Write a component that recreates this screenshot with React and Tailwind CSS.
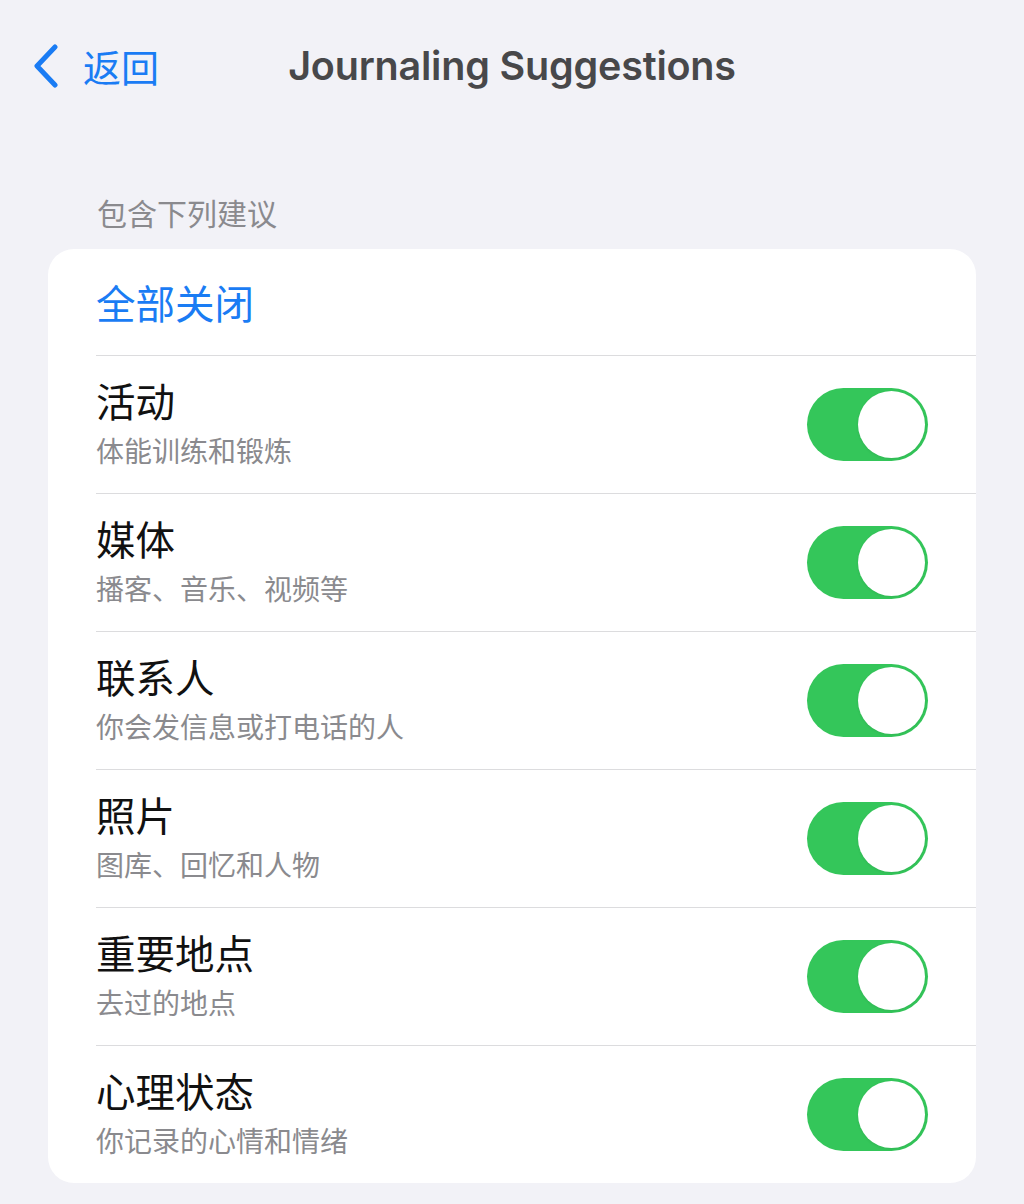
import React, { useState } from 'react';

const rows = [
  { title: '活动', sub: '体能训练和锻炼' },
  { title: '媒体', sub: '播客、音乐、视频等' },
  { title: '联系人', sub: '你会发信息或打电话的人' },
  { title: '照片', sub: '图库、回忆和人物' },
  { title: '重要地点', sub: '去过的地点' },
  { title: '心理状态', sub: '你记录的心情和情绪' },
];

const CJK = { fontFamily: '"Noto Sans CJK SC", "Noto Sans", sans-serif' };

// iOS style switch
const Toggle = ({ on, onChange }) => (
  <button
    onClick={onChange}
    className={`relative w-[121px] h-[73px] rounded-full shrink-0 flex items-center p-[3px] ${on ? 'bg-[#34c65a] justify-end' : 'bg-[#e5e5ea] justify-start'}`}
  >
    <span className="block w-[67px] h-[67px] rounded-full bg-white shadow-[0_1px_3px_rgba(0,0,0,0.08)]" />
  </button>
);

const App = () => {
  const [state, setState] = useState(rows.map(() => true));

  const flip = (i) => setState((s) => s.map((v, j) => (j === i ? !v : v)));

  return (
    <div className="min-h-screen w-[1024px] bg-[#f2f2f7]" style={CJK}>
      {/* nav bar */}
      <div className="grid grid-cols-[1fr_auto_1fr] items-center h-[132px]">
        <div className="flex items-center pl-[33px] gap-[24px] text-[#1a7cf4]">
          <svg width="26" height="44" viewBox="0 0 26 44" fill="none">
            <polyline points="22,3 4,22 22,41" stroke="#1a7cf4" strokeWidth="5" strokeLinecap="round" strokeLinejoin="round" />
          </svg>
          <span className="text-[38px] leading-[44px]">返回</span>
        </div>
        <div
          className="text-[39.5px] leading-[44px] font-semibold text-[#48484a] tracking-[-0.2px]"
          style={{ fontFamily: 'Inter, "Noto Sans", sans-serif' }}
        >
          Journaling Suggestions
        </div>
        <div />
      </div>

      <div className="pt-[62px] pb-[2px] pl-[97px] text-[30px] leading-[36px] text-[#8a8a8e]">包含下列建议</div>

      <div className="mx-[48px] mt-[17px] bg-white rounded-[26px] overflow-hidden">
        <div className="h-[106px] flex items-center pl-[48px] text-[39.5px] leading-[44px] text-[#1a7cf4]">
          全部关闭
        </div>
        {rows.map((r, i) => (
          <div key={r.title} className="ml-[48px] border-t border-[#dcdcde] h-[138px] flex items-center justify-between pr-[48px]">
            <div className="flex flex-col gap-[10px] pb-[4px]">
              <div className="text-[39.5px] leading-[44px] text-[#111111]">{r.title}</div>
              <div className="text-[28px] leading-[36px] text-[#8a8a8e]">{r.sub}</div>
            </div>
            <Toggle on={state[i]} onChange={() => flip(i)} />
          </div>
        ))}
      </div>
    </div>
  );
};

export default App;
